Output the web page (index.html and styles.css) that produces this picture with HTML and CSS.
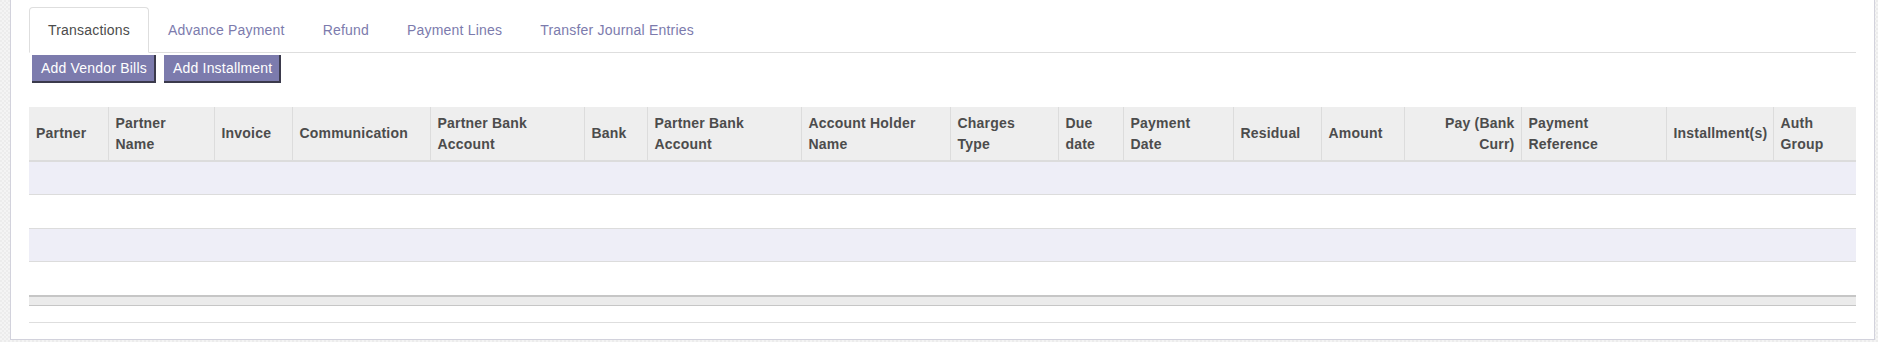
FILE: index.html
```html
<!DOCTYPE html>
<html lang="en">
<head>
  <meta charset="UTF-8">
  <title>Payment Order</title>
  <link rel="stylesheet" href="styles.css">
</head>
<body>

  <div class="sheet">
    <ul class="tabs">
      <li class="tab active">Transactions</li>
      <li class="tab">Advance Payment</li>
      <li class="tab">Refund</li>
      <li class="tab">Payment Lines</li>
      <li class="tab">Transfer Journal Entries</li>
    </ul>

    <div class="actions">
      <button class="btn">Add Vendor Bills</button>
      <button class="btn">Add Installment</button>
    </div>

    <table class="lines">
      <colgroup>
        <col style="width:79px"><col style="width:106px"><col style="width:78px"><col style="width:138px">
        <col style="width:154px"><col style="width:63px"><col style="width:154px"><col style="width:149px">
        <col style="width:108px"><col style="width:65px"><col style="width:110px"><col style="width:88px">
        <col style="width:83px"><col style="width:117px"><col style="width:145px"><col style="width:107px">
        <col style="width:83px">
      </colgroup>
      <thead>
        <tr>
          <th>Partner</th>
          <th>Partner<br>Name</th>
          <th>Invoice</th>
          <th>Communication</th>
          <th>Partner Bank<br>Account</th>
          <th>Bank</th>
          <th>Partner Bank<br>Account</th>
          <th>Account Holder<br>Name</th>
          <th>Charges<br>Type</th>
          <th>Due<br>date</th>
          <th>Payment<br>Date</th>
          <th>Residual</th>
          <th>Amount</th>
          <th class="num">Pay (Bank<br>Curr)</th>
          <th>Payment<br>Reference</th>
          <th>Installment(s)</th>
          <th>Auth<br>Group</th>
        </tr>
      </thead>
      <tbody>
        <tr class="odd"><td colspan="17"></td></tr>
        <tr><td colspan="17"></td></tr>
        <tr class="odd"><td colspan="17"></td></tr>
        <tr class="last"><td colspan="17"></td></tr>
      </tbody>
      <tfoot>
        <tr><td colspan="17"></td></tr>
      </tfoot>
    </table>
    <div class="after"></div>
  </div>

</body>
</html>
```

FILE: styles.css
```css
html, body {
  margin: 0;
  padding: 0;
}
body {
  height: 342px;
  overflow: hidden;
  font-family: "Liberation Sans", Arial, sans-serif;
  font-size: 14px;
  letter-spacing: 0.2px;
  color: #4c4c4c;
  background-color: #ececec;
  background-image:
    linear-gradient(45deg, #f4f4f4 25%, transparent 25%, transparent 75%, #f4f4f4 75%),
    linear-gradient(45deg, #f4f4f4 25%, transparent 25%, transparent 75%, #f4f4f4 75%);
  background-size: 4px 4px;
  background-position: 0 0, 2px 2px;
}

/* Formular-Blatt */
.sheet {
  margin-left: 10px;
  width: 1865px;
  height: 340px;
  padding: 7px 18px 0 18px;
  box-sizing: border-box;
  background: #fff;
  border: 1px solid #d2d2dc;
  border-top: none;
}

/* Reiter */
.tabs {
  display: flex;
  list-style: none;
  margin: 0;
  padding: 0;
  border-bottom: 1px solid #dedede;
}
.tab {
  margin-bottom: -1px;
  padding: 12px 18px;
  line-height: 20px;
  border: 1px solid transparent;
  border-radius: 4px 4px 0 0;
  color: #7c7bad;
  white-space: nowrap;
}
.tab.active {
  color: #4c4c4c;
  background: #fff;
  border-color: #dedede #dedede #fff;
}

/* Knöpfe */
.actions {
  display: flex;
  gap: 8px;
  margin-top: 2px;
  padding-left: 3px;
}
.btn {
  font-family: inherit;
  font-size: 14px;
  letter-spacing: 0.2px;
  line-height: 20px;
  padding: 3px 7px 3px 9px;
  color: #fff;
  background: #7c7bad;
  border: none;
  border-right: 2px solid #3b3a4c;
  border-bottom: 2px solid #3b3a4c;
  border-radius: 0;
}

/* Tabelle */
.lines {
  margin-top: 24px;
  width: 1827px;
  table-layout: fixed;
  border-collapse: collapse;
}
.lines th {
  height: 53px;
  padding: 0 6px 0 7px;
  text-align: left;
  vertical-align: middle;
  white-space: nowrap;
  font-weight: bold;
  line-height: 21px;
  background: #eeeeee;
  border-left: 1px solid #dcdcdc;
  border-bottom: 2px solid #dcdcdc;
}
.lines th:first-child {
  border-left: none;
}
.lines th.num {
  text-align: right;
}
.lines tbody td {
  height: 32.4px;
  padding: 0;
  border-bottom: 1px solid #dcdcdc;
}
.lines tbody tr.odd td {
  background: #eeeef7;
}
.lines tbody tr.last td {
  border-bottom: none;
}
.lines tfoot td {
  height: 8px;
  padding: 0;
  background: #ebebeb;
  border-top: 2px solid #c6c6c6;
  border-bottom: 1px solid #c6c6c6;
}
.after {
  width: 1827px;
  height: 16px;
  border-bottom: 1px solid #dedede;
}
```
